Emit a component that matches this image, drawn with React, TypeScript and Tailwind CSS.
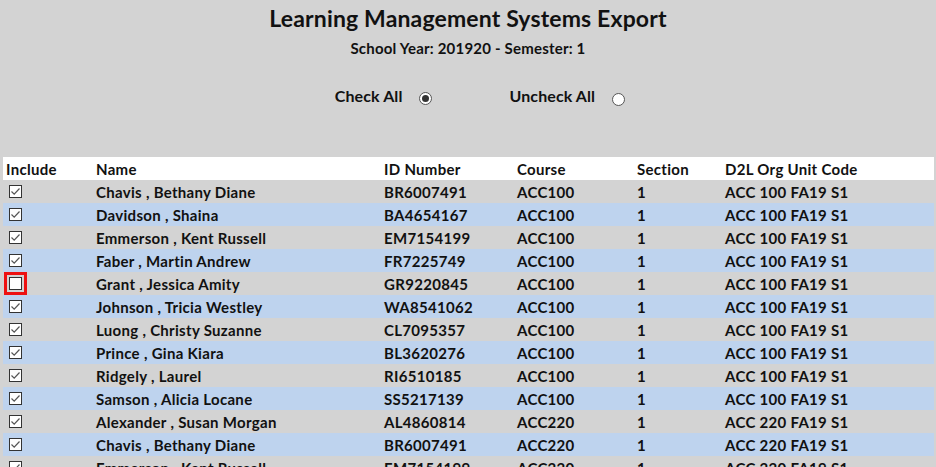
import React from 'react';

type Row = { name: string; id: string; course: string; section: string; code: string; checked: boolean };

const rows: Row[] = [
    { name: 'Chavis , Bethany Diane', id: 'BR6007491', course: 'ACC100', section: '1', code: 'ACC 100 FA19 S1', checked: true },
    { name: 'Davidson , Shaina', id: 'BA4654167', course: 'ACC100', section: '1', code: 'ACC 100 FA19 S1', checked: true },
    { name: 'Emmerson , Kent Russell', id: 'EM7154199', course: 'ACC100', section: '1', code: 'ACC 100 FA19 S1', checked: true },
    { name: 'Faber , Martin Andrew', id: 'FR7225749', course: 'ACC100', section: '1', code: 'ACC 100 FA19 S1', checked: true },
    { name: 'Grant , Jessica Amity', id: 'GR9220845', course: 'ACC100', section: '1', code: 'ACC 100 FA19 S1', checked: false },
    { name: 'Johnson , Tricia Westley', id: 'WA8541062', course: 'ACC100', section: '1', code: 'ACC 100 FA19 S1', checked: true },
    { name: 'Luong , Christy Suzanne', id: 'CL7095357', course: 'ACC100', section: '1', code: 'ACC 100 FA19 S1', checked: true },
    { name: 'Prince , Gina Kiara', id: 'BL3620276', course: 'ACC100', section: '1', code: 'ACC 100 FA19 S1', checked: true },
    { name: 'Ridgely , Laurel', id: 'RI6510185', course: 'ACC100', section: '1', code: 'ACC 100 FA19 S1', checked: true },
    { name: 'Samson , Alicia Locane', id: 'SS5217139', course: 'ACC100', section: '1', code: 'ACC 100 FA19 S1', checked: true },
    { name: 'Alexander , Susan Morgan', id: 'AL4860814', course: 'ACC220', section: '1', code: 'ACC 220 FA19 S1', checked: true },
    { name: 'Chavis , Bethany Diane', id: 'BR6007491', course: 'ACC220', section: '1', code: 'ACC 220 FA19 S1', checked: true },
    { name: 'Emmerson , Kent Russell', id: 'EM7154199', course: 'ACC220', section: '1', code: 'ACC 220 FA19 S1', checked: true },
];

const Radio: React.FC<{ checked: boolean }> = ({ checked }) => (
    <svg width="13" height="13" viewBox="0 0 13 13" className="block">
        <circle cx="6.5" cy="6.5" r="6" fill="#fff" stroke="#555" strokeWidth="1" />
        {checked && <circle cx="6.5" cy="6.5" r="3.5" fill="#333" />}
    </svg>
);

const CheckBox: React.FC<{ checked: boolean; focused?: boolean }> = ({ checked, focused }) => (
    <span className={`ml-[6px] flex h-[13px] w-[13px] items-center justify-center border border-[#333] bg-white ${focused ? 'outline-[3px] outline-offset-[2px] outline-[#ee1111] outline-solid' : ''}`}>
        {checked && (
            <svg width="11" height="11" viewBox="0 0 11 11">
                <path d="M1.5 5.5 L4.2 8.2 L9.5 2.5" fill="none" stroke="#555" strokeWidth="1.2" />
            </svg>
        )}
    </span>
);

const cell = 'pl-[3px] pt-[2px] leading-[21px] whitespace-nowrap';

export default function App() {
    return (
        <div className="h-[467px] w-[936px] overflow-hidden bg-[#d3d3d3] text-[#111] font-bold" style={{ fontFamily: 'Lato, "DejaVu Sans", sans-serif' }}>
            <h1 className="pt-[5px] text-center text-[23px] leading-[26px] tracking-[0.15px]">Learning Management Systems Export</h1>
            <div className="mt-[8px] text-center text-[15px] leading-[18px] tracking-[0.2px]">School Year: 201920 - Semester: 1</div>
            <div className="mt-[29px] flex h-[20px] items-center justify-center pl-[24px] text-[16px] tracking-[0.1px]">
                <span>Check All</span>
                <span className="ml-[16px] mt-[5px]"><Radio checked /></span>
                <span className="ml-[78px]">Uncheck All</span>
                <span className="ml-[17px] mt-[6px]"><Radio checked={false} /></span>
            </div>
            <table className="ml-[3px] mt-[51px] w-[931px] table-fixed border-collapse text-[15px] tracking-[0.3px]">
                <colgroup>
                    <col className="w-[90px]" />
                    <col className="w-[288px]" />
                    <col className="w-[133px]" />
                    <col className="w-[120px]" />
                    <col className="w-[88px]" />
                    <col />
                </colgroup>
                <thead>
                    <tr className="h-[23px] bg-white text-left">
                        <th className={`${cell} font-bold`}>Include</th>
                        <th className={`${cell} font-bold`}>Name</th>
                        <th className={`${cell} font-bold`}>ID Number</th>
                        <th className={`${cell} font-bold`}>Course</th>
                        <th className={`${cell} font-bold`}>Section</th>
                        <th className={`${cell} font-bold`}>D2L Org Unit Code</th>
                    </tr>
                </thead>
                <tbody>
                    {rows.map((r, i) => (
                        <tr key={i} className={`h-[23px] ${i % 2 === 1 ? 'bg-[#bed3ee]' : ''}`}>
                            <td className="p-0"><CheckBox checked={r.checked} focused={!r.checked} /></td>
                            <td className={cell}>{r.name}</td>
                            <td className={cell}>{r.id}</td>
                            <td className={cell}>{r.course}</td>
                            <td className={cell}>{r.section}</td>
                            <td className={cell}>{r.code}</td>
                        </tr>
                    ))}
                </tbody>
            </table>
        </div>
    );
}
